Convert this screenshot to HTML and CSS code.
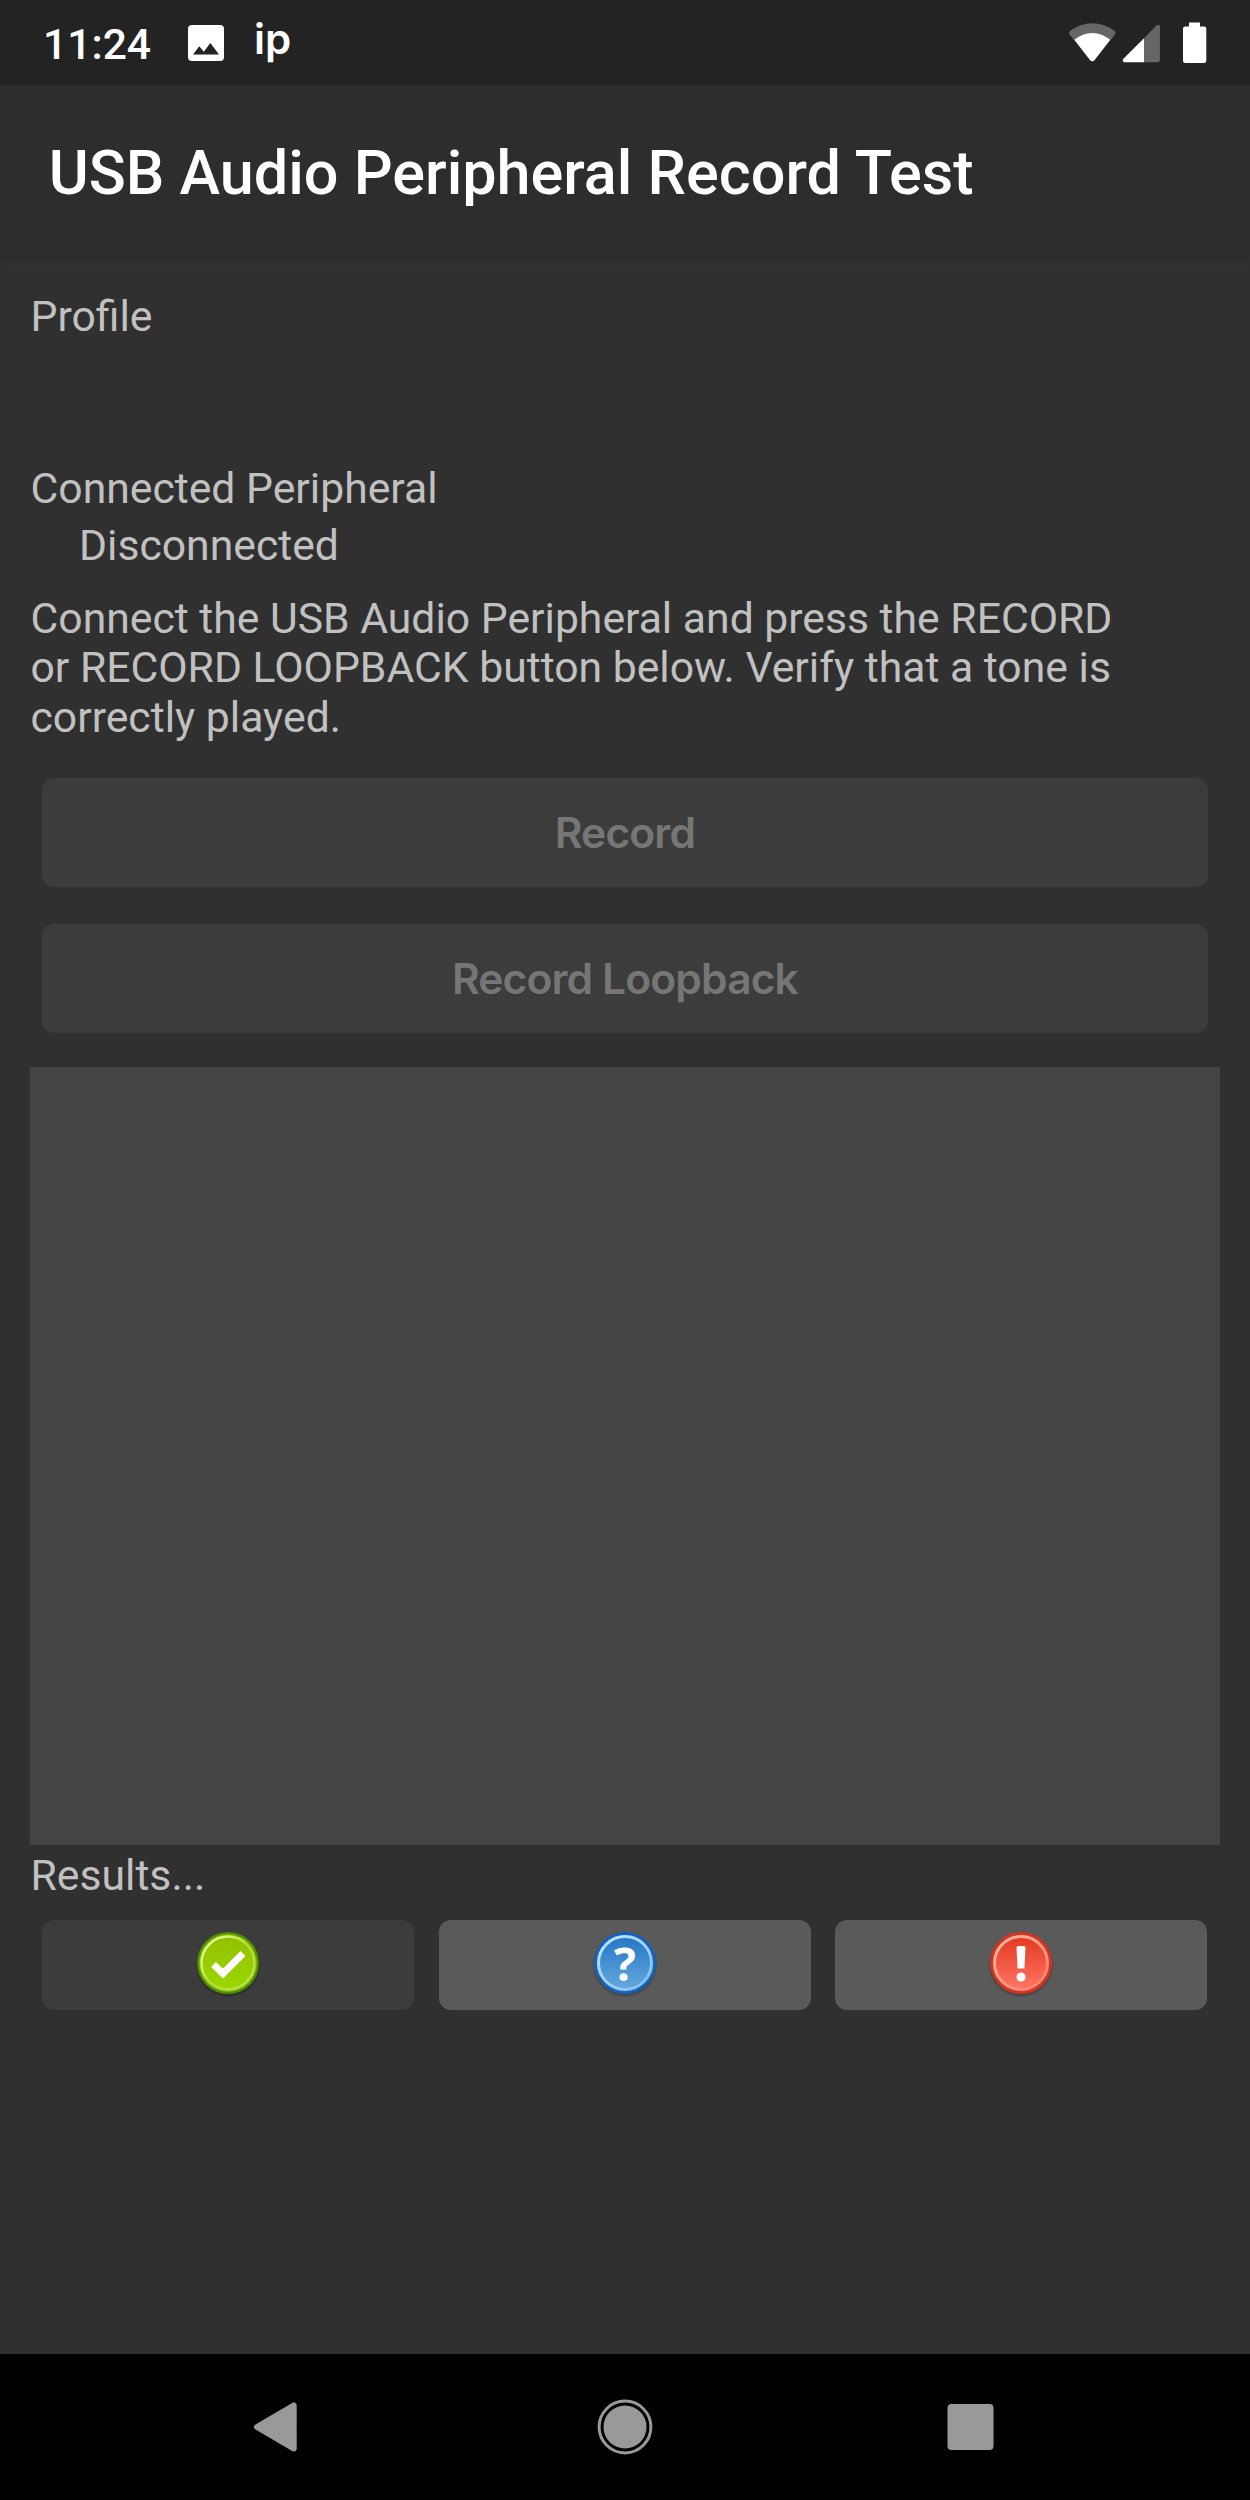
FILE: index.html
```html
<!DOCTYPE html>
<html lang="en">
<head>
<meta charset="utf-8">
<title>USB Audio Peripheral Record Test</title>
<link rel="stylesheet" href="styles.css">
</head>
<body>
<div class="screen">
  <header class="status-bar">
    <span class="clock">11:24</span>
    <svg class="photo-icon" width="36" height="36" viewBox="0 0 36 36">
      <rect width="36" height="36" rx="4" fill="#fff"/>
      <path d="M5 29.5 11.3 21.3 15.8 26.8 22.3 18 31 29.5Z" fill="#232323"/>
    </svg>
    <span class="notice">ip</span>
    <svg class="system-icons" width="140" height="44" viewBox="0 0 140 44">
      <path d="M24.3 42.3Q23 42.3 22 41L1.2 15Q.4 13.3 2 12Q12 4.4 24.3 4.2Q36.600 4.400 46.600 12Q48.200 13.300 47.400 15L26.600 41Q25.600 42.300 24.300 42.300Z" fill="#666"/>
      <path d="M6.400 20.800Q14.500 14 24.300 13.900Q34.100 14 42.200 20.800L26.600 41Q25.600 42.300 24.300 42.300Q23 42.300 22 41Z" fill="#fff"/>
      <path d="M76 19.300 88.500 6.500Q91.900 4.600 91.900 7.500V41Q91.900 43.200 89.700 43.200H76Z" fill="#666"/>
      <path d="M76 19.300V43.200H56.500Q53.500 42.500 55.600 39.500Z" fill="#fff"/>
      <path d="M121 3.500H132V7.500H136Q138.300 7.500 138.300 9.500V42Q138.300 44 136 44H117.200Q115 44 115 42V9.500Q115 7.500 117.200 7.500H121Z" fill="#fff"/>
    </svg>
  </header>

  <div class="app-bar"><h1>USB Audio Peripheral Record Test</h1></div>

  <main class="content">
    <p class="label profile">Profile</p>
    <p class="label">Connected Peripheral</p>
    <p class="label state">Disconnected</p>
    <p class="instructions">Connect the USB Audio Peripheral and press the RECORD<br>or RECORD LOOPBACK button below. Verify that a tone is<br>correctly played.</p>
    <div class="actions">
      <button class="action" disabled>Record</button>
      <button class="action" disabled>Record Loopback</button>
    </div>
    <div class="wave-view"></div>
    <p class="label results">Results...</p>
    <div class="verdicts">
      <button class="verdict off" disabled aria-label="Pass">
        <svg width="70" height="70" viewBox="0 0 70 70">
          <defs>
            <linearGradient id="gFill" x2="0" y2="1"><stop stop-color="#94c000"/><stop offset="1" stop-color="#9ad800"/></linearGradient>
            <linearGradient id="gRing" x2="1" y2="1"><stop offset=".15" stop-color="#e4f98c"/><stop offset=".5" stop-color="#b4dc3c"/><stop offset="1" stop-color="#b8e254"/></linearGradient>
            <radialGradient id="shade"><stop offset=".82" stop-color="#000" stop-opacity=".4"/><stop offset="1" stop-color="#000" stop-opacity="0"/></radialGradient>
          </defs>
          <circle cx="35" cy="37" r="33" fill="url(#shade)"/>
          <circle cx="35" cy="35" r="31" fill="#4f8f00"/>
          <circle cx="35" cy="35" r="29" fill="#7fb800"/>
          <circle cx="35" cy="35" r="26.500" fill="url(#gFill)" stroke="url(#gRing)" stroke-width="2.500"/>
          <path d="M20.500 36.500 30 45.500 50 25.500" fill="none" stroke="#fff" stroke-width="7"/>
        </svg>
      </button>
      <button class="verdict" aria-label="Info">
        <svg width="70" height="70" viewBox="0 0 70 70">
          <defs>
            <linearGradient id="bFill" x2="0" y2="1"><stop stop-color="#2576c4"/><stop offset="1" stop-color="#65a8dd"/></linearGradient>
            <linearGradient id="bRing" x2="1" y2="1"><stop offset=".2" stop-color="#b4e0ff"/><stop offset="1" stop-color="#76bdf5"/></linearGradient>
          </defs>
          <circle cx="35" cy="37" r="33" fill="url(#shade)"/>
          <circle cx="35" cy="35" r="31" fill="#1762b8"/>
          <circle cx="35" cy="35" r="26.500" fill="url(#bFill)" stroke="url(#bRing)" stroke-width="3"/>
          <text class="glyph" x="35" y="52.500" text-anchor="middle">?</text>
        </svg>
      </button>
      <button class="verdict" aria-label="Fail">
        <svg width="70" height="70" viewBox="0 0 70 70">
          <defs>
            <linearGradient id="rFill" x2="0" y2="1"><stop stop-color="#e33a20"/><stop offset="1" stop-color="#ff7564"/></linearGradient>
            <linearGradient id="rRing" x2="1" y2="1"><stop offset=".15" stop-color="#ffb09a"/><stop offset="1" stop-color="#ff7a68"/></linearGradient>
          </defs>
          <circle cx="35" cy="37" r="33" fill="url(#shade)"/>
          <circle cx="35" cy="35" r="31" fill="#d23422"/>
          <circle cx="35" cy="35" r="26.500" fill="url(#rFill)" stroke="url(#rRing)" stroke-width="3"/>
          <path d="M30.500 20Q30.500 18 32.500 18H37.500Q39.500 18 39.500 20L38.400 40.500H31.600Z" fill="#fff"/>
          <circle cx="35" cy="49" r="4.500" fill="#fff"/>
        </svg>
      </button>
    </div>
  </main>

  <nav class="nav-bar">
    <svg width="56" height="56" viewBox="0 0 56 56"><path d="M9 28 45.700 6.500V49.500Z" fill="#999" stroke="#999" stroke-width="6" stroke-linejoin="round"/></svg>
    <svg width="60" height="56" viewBox="0 0 60 56"><circle cx="32" cy="28" r="25.900" fill="none" stroke="#999" stroke-width="3"/><circle cx="32" cy="28" r="21.500" fill="#999"/></svg>
    <svg width="56" height="56" viewBox="0 0 56 56"><rect x="5.500" y="5" width="46" height="46" rx="4" fill="#999"/></svg>
  </nav>
</div>
</body>
</html>
```
FILE: styles.css
```css
* { box-sizing: border-box; }

body {
  margin: 0;
  background: #303030;
  font-family: Roboto, sans-serif;
}

p, h1 { margin: 0; }

.screen {
  display: flex;
  flex-direction: column;
  width: 1250px;
  height: 2500px;
  overflow: hidden;
}

.status-bar {
  display: flex;
  align-items: flex-start;
  height: 85px;
  padding: 0 42px 0 43px;
  background: #232323;
  color: #fff;
}

.clock {
  width: 145px;
  padding-top: 19px;
  font-size: 42.6px;
  font-weight: 500;
  line-height: 50px;
}

.photo-icon { margin-top: 25px; }

.notice {
  margin: 14px auto 0 30px;
  font: 600 42px/50px Inter, sans-serif;
}

.system-icons { margin-top: 19px; }

.app-bar {
  height: 171px;
  padding: 53px 48.7px 0;
  background: #2d2d2d;
  box-shadow: 0 2px 8px rgba(0, 0, 0, 0.12);
  color: #fff;
}

.app-bar h1 {
  font-size: 61.15px;
  font-weight: 500;
  line-height: 70px;
  white-space: nowrap;
}

.content {
  flex: 1;
  padding: 35px 30px 0;
  color: #c1c1c1;
  font-size: 42.7px;
}

.label {
  padding-left: 0.5px;
  line-height: 50px;
}

.profile { margin-bottom: 122px; }
.state { margin: 7px 0 0 48.5px; }

.instructions {
  margin-top: 23.5px;
  padding-left: 0.5px;
  line-height: 49.6px;
  white-space: nowrap;
}

.actions {
  display: grid;
  gap: 37px;
  margin: 35.4px 12.5px 34.3px 12.4px;
}

.action {
  height: 109px;
  border: 0;
  border-radius: 12px;
  background: #3c3c3c;
  color: #767676;
  font: 600 42.6px Inter, sans-serif;
  letter-spacing: -0.9px;
}

.wave-view {
  height: 778px;
  background: #444;
}

.results { margin-top: 5.5px; }

.verdicts {
  display: grid;
  grid-template-columns: repeat(3, 1fr);
  gap: 24.5px;
  margin: 20px 12.7px 0 12.4px;
}

.verdict {
  display: flex;
  justify-content: center;
  height: 90px;
  padding: 8px 0 0;
  border: 0;
  border-radius: 12px;
  background: #5a5a5b;
}

.verdict.off { background: #3c3c3c; }

.glyph {
  fill: #fff;
  font: 700 46px "Open Sans", sans-serif;
}

.nav-bar {
  display: flex;
  justify-content: space-between;
  height: 146px;
  padding: 45px 252px 0 248px;
  background: #000;
}
```
